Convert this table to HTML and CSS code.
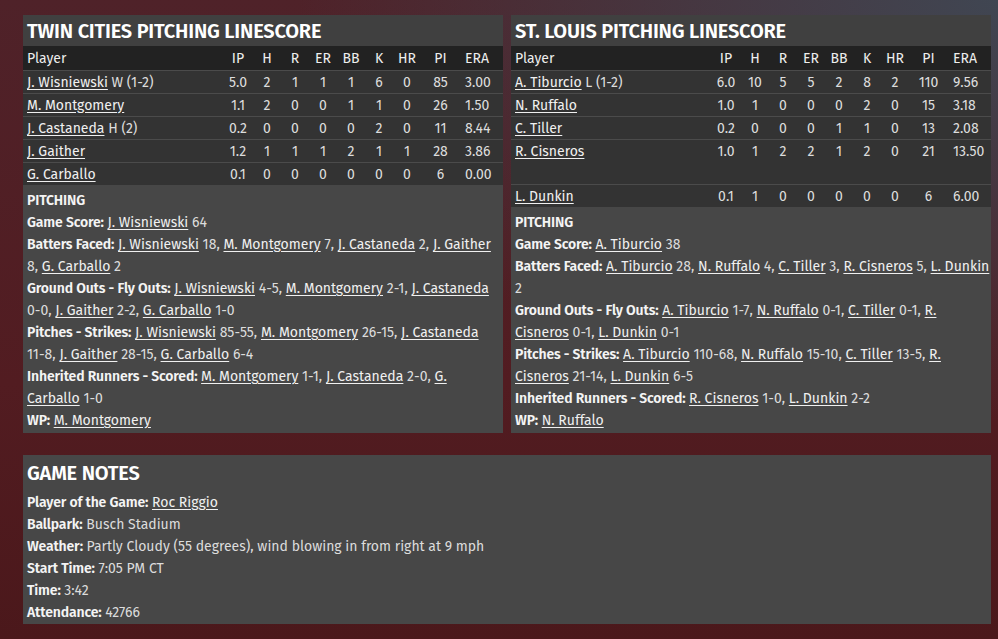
FILE: index.html
```html
<!DOCTYPE html>
<html>
<head>
<meta charset="utf-8">
<link rel="stylesheet" href="styles.css">
</head>
<body>
<div class="page">
  <div class="top">
    <div class="panel">
      <div class="title">TWIN CITIES PITCHING LINESCORE</div>
      <table class="ls">
        <colgroup><col class="c-p"><col class="c-ip"><col class="c-n"><col class="c-n"><col class="c-n"><col class="c-n"><col class="c-n"><col class="c-n"><col class="c-pi"><col class="c-era"></colgroup>
        <thead><tr><th class="pl">Player</th><th>IP</th><th>H</th><th>R</th><th>ER</th><th>BB</th><th>K</th><th>HR</th><th class="pi">PI</th><th class="era">ERA</th></tr></thead>
        <tbody>
          <tr><td class="pl"><a>J. Wisniewski</a> W (1-2)</td><td>5.0</td><td>2</td><td>1</td><td>1</td><td>1</td><td>6</td><td>0</td><td class="pi">85</td><td class="era">3.00</td></tr>
          <tr><td class="pl"><a>M. Montgomery</a></td><td>1.1</td><td>2</td><td>0</td><td>0</td><td>1</td><td>1</td><td>0</td><td class="pi">26</td><td class="era">1.50</td></tr>
          <tr><td class="pl"><a>J. Castaneda</a> H (2)</td><td>0.2</td><td>0</td><td>0</td><td>0</td><td>0</td><td>2</td><td>0</td><td class="pi">11</td><td class="era">8.44</td></tr>
          <tr><td class="pl"><a>J. Gaither</a></td><td>1.2</td><td>1</td><td>1</td><td>1</td><td>2</td><td>1</td><td>1</td><td class="pi">28</td><td class="era">3.86</td></tr>
          <tr><td class="pl"><a>G. Carballo</a></td><td>0.1</td><td>0</td><td>0</td><td>0</td><td>0</td><td>0</td><td>0</td><td class="pi">6</td><td class="era">0.00</td></tr>
        </tbody>
      </table>
      <div class="notes">
        <div class="line b">PITCHING</div>
        <div class="line"><b>Game Score:</b> <a>J. Wisniewski</a> 64</div>
        <div class="line"><b>Batters Faced:</b> <a>J. Wisniewski</a> 18, <a>M. Montgomery</a> 7, <a>J. Castaneda</a> 2, <a>J. Gaither</a> 8, <a>G. Carballo</a> 2</div>
        <div class="line"><b>Ground Outs - Fly Outs:</b> <a>J. Wisniewski</a> <span class="nw">4-5</span>, <a>M. Montgomery</a> <span class="nw">2-1</span>, <a>J. Castaneda</a> <span class="nw">0-0</span>, <a>J. Gaither</a> <span class="nw">2-2</span>, <a>G. Carballo</a> <span class="nw">1-0</span></div>
        <div class="line"><b>Pitches - Strikes:</b> <a>J. Wisniewski</a> <span class="nw">85-55</span>, <a>M. Montgomery</a> <span class="nw">26-15</span>, <a>J. Castaneda</a> <span class="nw">11-8</span>, <a>J. Gaither</a> <span class="nw">28-15</span>, <a>G. Carballo</a> <span class="nw">6-4</span></div>
        <div class="line"><b>Inherited Runners - Scored:</b> <a>M. Montgomery</a> <span class="nw">1-1</span>, <a>J. Castaneda</a> <span class="nw">2-0</span>, <a>G. Carballo</a> <span class="nw">1-0</span></div>
        <div class="line"><b>WP:</b> <a>M. Montgomery</a></div>
      </div>
    </div>
    <div class="panel">
      <div class="title">ST. LOUIS PITCHING LINESCORE</div>
      <table class="ls">
        <colgroup><col class="c-p"><col class="c-ip"><col class="c-n"><col class="c-n"><col class="c-n"><col class="c-n"><col class="c-n"><col class="c-n"><col class="c-pi"><col class="c-era"></colgroup>
        <thead><tr><th class="pl">Player</th><th>IP</th><th>H</th><th>R</th><th>ER</th><th>BB</th><th>K</th><th>HR</th><th class="pi">PI</th><th class="era">ERA</th></tr></thead>
        <tbody>
          <tr><td class="pl"><a>A. Tiburcio</a> L (1-2)</td><td>6.0</td><td>10</td><td>5</td><td>5</td><td>2</td><td>8</td><td>2</td><td class="pi">110</td><td class="era">9.56</td></tr>
          <tr><td class="pl"><a>N. Ruffalo</a></td><td>1.0</td><td>1</td><td>0</td><td>0</td><td>0</td><td>2</td><td>0</td><td class="pi">15</td><td class="era">3.18</td></tr>
          <tr><td class="pl"><a>C. Tiller</a></td><td>0.2</td><td>0</td><td>0</td><td>0</td><td>1</td><td>1</td><td>0</td><td class="pi">13</td><td class="era">2.08</td></tr>
          <tr class="tall"><td class="pl"><a>R. Cisneros</a></td><td>1.0</td><td>1</td><td>2</td><td>2</td><td>1</td><td>2</td><td>0</td><td class="pi">21</td><td class="era">13.50</td></tr>
          <tr><td class="pl"><a>L. Dunkin</a></td><td>0.1</td><td>1</td><td>0</td><td>0</td><td>0</td><td>0</td><td>0</td><td class="pi">6</td><td class="era">6.00</td></tr>
        </tbody>
      </table>
      <div class="notes r">
        <div class="line b">PITCHING</div>
        <div class="line"><b>Game Score:</b> <a>A. Tiburcio</a> 38</div>
        <div class="line"><b>Batters Faced:</b> <a>A. Tiburcio</a> 28, <a>N. Ruffalo</a> 4, <a>C. Tiller</a> 3, <a>R. Cisneros</a> 5, <a>L. Dunkin</a> 2</div>
        <div class="line"><b>Ground Outs - Fly Outs:</b> <a>A. Tiburcio</a> <span class="nw">1-7</span>, <a>N. Ruffalo</a> <span class="nw">0-1</span>, <a>C. Tiller</a> <span class="nw">0-1</span>, <a>R. Cisneros</a> <span class="nw">0-1</span>, <a>L. Dunkin</a> <span class="nw">0-1</span></div>
        <div class="line"><b>Pitches - Strikes:</b> <a>A. Tiburcio</a> <span class="nw">110-68</span>, <a>N. Ruffalo</a> <span class="nw">15-10</span>, <a>C. Tiller</a> <span class="nw">13-5</span>, <a>R. Cisneros</a> <span class="nw">21-14</span>, <a>L. Dunkin</a> <span class="nw">6-5</span></div>
        <div class="line"><b>Inherited Runners - Scored:</b> <a>R. Cisneros</a> <span class="nw">1-0</span>, <a>L. Dunkin</a> <span class="nw">2-2</span></div>
        <div class="line"><b>WP:</b> <a>N. Ruffalo</a></div>
      </div>
    </div>
  </div>
  <div class="panel gn">
    <div class="title">GAME NOTES</div>
    <div class="gbody">
      <div class="line"><b>Player of the Game:</b> <a>Roc Riggio</a></div>
      <div class="line"><b>Ballpark:</b> Busch Stadium</div>
      <div class="line"><b>Weather:</b> Partly Cloudy (55 degrees), wind blowing in from right at 9 mph</div>
      <div class="line"><b>Start Time:</b> 7:05 PM CT</div>
      <div class="line"><b>Time:</b> 3:42</div>
      <div class="line"><b>Attendance:</b> 42766</div>
    </div>
  </div>
</div>
</body>
</html>
```

FILE: styles.css
```css
html, body {
  margin: 0;
  padding: 0;
  width: 998px;
  height: 639px;
  overflow: hidden;
}
body {
  font-family: "Fira Sans", "Open Sans", sans-serif;
  font-size: 14px;
  color: #e4e4e4;
  background:
    radial-gradient(ellipse 700px 420px at 100% 0%, rgba(64, 70, 82, 1) 0%, rgba(64, 68, 80, 0.6) 45%, rgba(64, 68, 80, 0) 100%),
    linear-gradient(180deg, #4f2229 0%, #521c21 60%, #4b181b 100%);
}
.page {
  padding: 15px 7px 0 23px;
  display: flex;
  flex-direction: column;
  gap: 22px;
}
.top {
  display: flex;
  gap: 8px;
}
.panel {
  width: 480px;
  background: #474747;
  display: flex;
  flex-direction: column;
}
.title {
  background: #404040;
  font-weight: 600;
  font-size: 20px;
  color: #fff;
  height: 31px;
  line-height: 33px;
  padding-left: 4px;
  letter-spacing: -0.2px;
}
.ls {
  width: 480px;
  border-collapse: collapse;
  table-layout: fixed;
}
.c-p { width: 200px; }
.c-ip { width: 30px; }
.c-n { width: 28px; }
.c-pi { width: 44px; }
.c-era { width: 38px; }
.ls th, .ls td {
  height: 22px;
  padding: 0;
  text-align: center;
  white-space: nowrap;
  font-weight: normal;
}
.ls th {
  background: #222;
  color: #eee;
  height: 24px;
}
.ls td {
  background: #333;
  color: #ddd;
  border-top: 1px solid #4b4b4b;
}
.ls .pl {
  text-align: left;
  padding-left: 4px;
}
.ls .pi {
  padding-right: 5px;
}
.ls .era {
  text-align: left;
}
.ls tr.tall td {
  height: 41px;
  vertical-align: top;
  padding-top: 3px;
}
.ls tr.tall td.pi {
  padding-right: 5px;
}
a {
  color: #f0f0f0;
  text-decoration: underline;
  text-underline-offset: 2px;
}
.nw {
  white-space: nowrap;
}
.notes {
  padding: 5px 4px 1px 4px;
  background: #474747;
  flex: 1;
}
.notes.r {
  padding-right: 0;
}
.line {
  line-height: 22px;
  color: #dcdcdc;
}
.line b, .line.b {
  font-weight: 600;
  color: #f4f4f4;
  letter-spacing: -0.15px;
}
.gn {
  width: 968px;
}
.gn .title {
  background: #474747;
  height: 37px;
  line-height: 37px;
}
.gbody {
  padding: 0 4px 0 4px;
}
```
